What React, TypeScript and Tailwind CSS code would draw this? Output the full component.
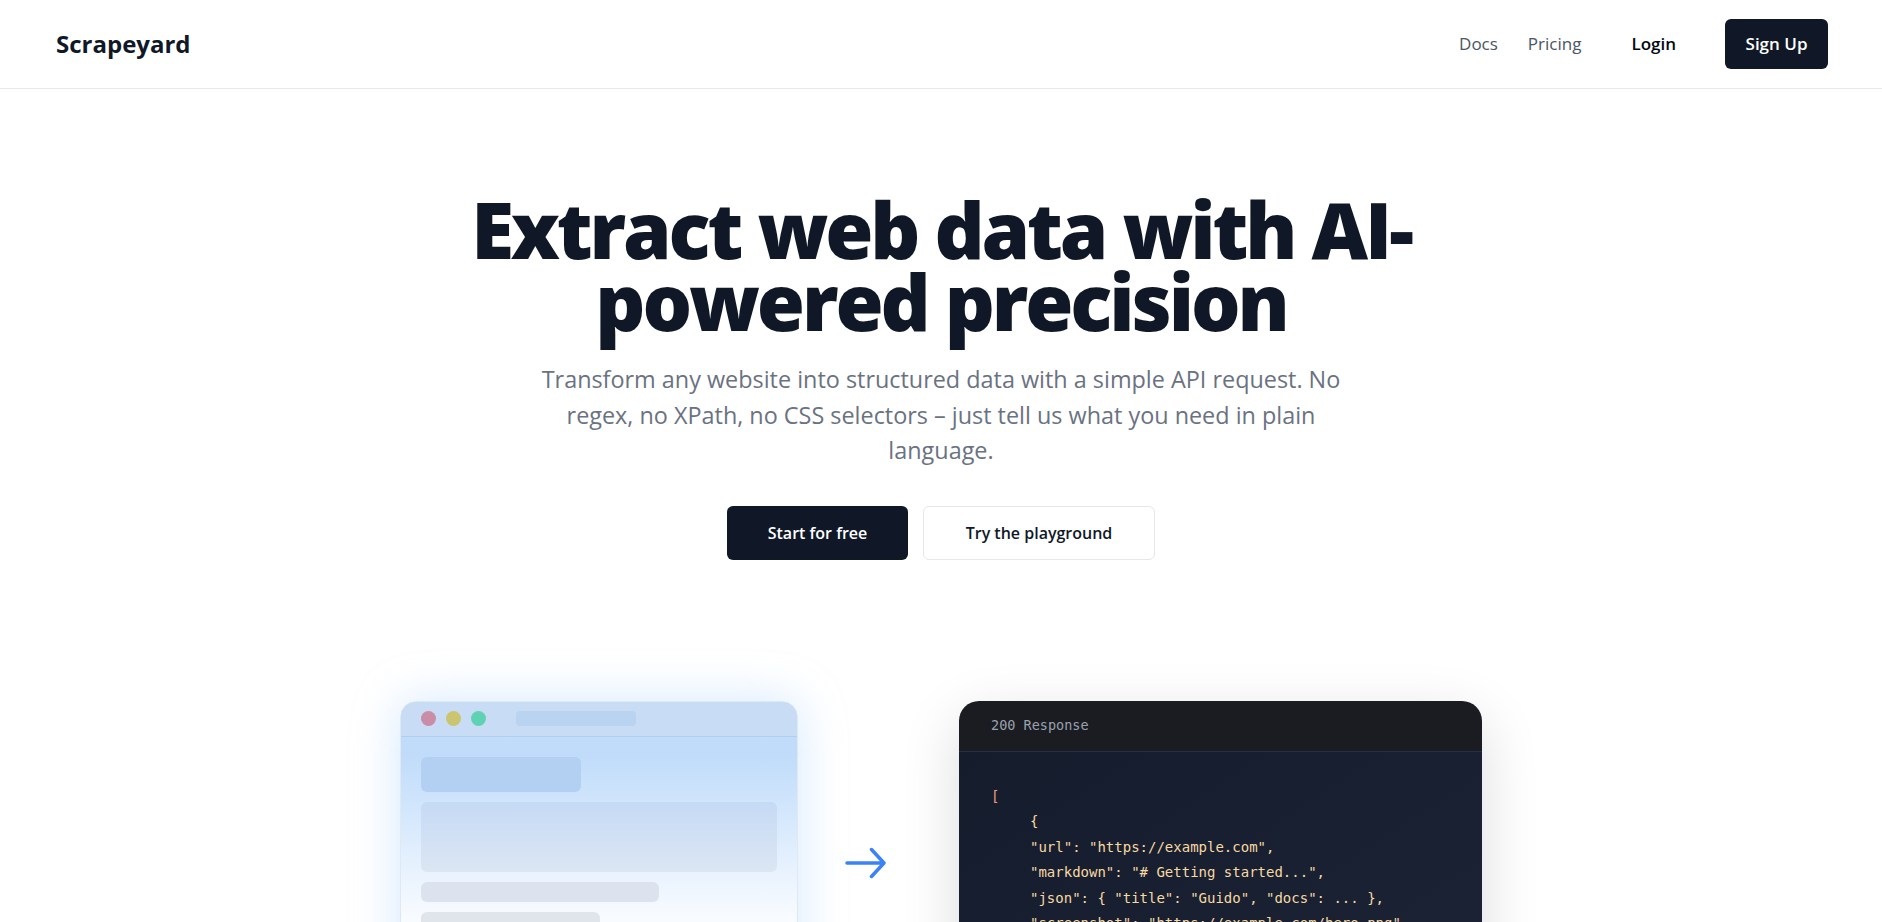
import React from "react";

const sans = "font-['Open_Sans','Noto_Sans',sans-serif]";
const mono = "font-['DejaVu_Sans_Mono','Liberation_Mono',monospace]";

const responseLines = [
  "{",
  '"url": "https://example.com",',
  '"markdown": "# Getting started...",',
  '"json": { "title": "Guido", "docs": ... },',
  '"screenshot": "https://example.com/hero.png"',
  "}",
];

function Header() {
  return (
    <header className="flex h-[89px] items-center justify-between border-b border-gray-200 pl-[56px] pr-[54px]">
      <span className="text-[24px] font-bold text-gray-900">Scrapeyard</span>
      <nav className="flex items-center text-[17px]">
        <a className="text-gray-600">Docs</a>
        <a className="ml-[30px] text-gray-600">Pricing</a>
        <a className="ml-[50px] font-semibold text-gray-950">Login</a>
        <button
          type="button"
          className="ml-[49px] flex h-[50px] w-[103px] items-center justify-center rounded-md bg-gray-900 font-semibold text-white"
        >
          Sign Up
        </button>
      </nav>
    </header>
  );
}

function BrowserMock() {
  return (
    <div className="h-[360px] w-[398px] overflow-hidden rounded-t-2xl border border-[#dfe8f3] bg-gradient-to-b from-[#c0dcfa] from-15% to-[#f8fbff] to-60% shadow-[0_0_48px_rgba(147,197,253,0.4)]">
      <div className="flex h-[35px] items-center border-b border-[#b4cdea] bg-[#c8ddf5] pl-[20px]">
        <div className="flex gap-[10px]">
          <span className="h-[15px] w-[15px] rounded-full bg-[#ca8ca6]" />
          <span className="h-[15px] w-[15px] rounded-full bg-[#cbc570]" />
          <span className="h-[15px] w-[15px] rounded-full bg-[#5fd2b4]" />
        </div>
        <div className="ml-[30px] h-[15px] w-[120px] rounded bg-[#b9d3f1]" />
      </div>
      <div className="flex flex-col gap-[10px] px-[20px] pt-[20px]">
        <div className="h-[35px] w-[160px] rounded-md bg-[#b3cff1]" />
        <div className="h-[70px] w-full rounded-md bg-gradient-to-b from-[#c5daf5] to-[#dce6f3]" />
        <div className="h-[20px] w-[238px] rounded-md bg-[#dce3ee]" />
        <div className="h-[20px] w-[179px] rounded-md bg-[#e0e4eb]" />
        <div className="h-[20px] w-[210px] rounded-md bg-[#e3e7ee]" />
      </div>
    </div>
  );
}

function ResponsePanel() {
  return (
    <div className="w-[523px] overflow-hidden rounded-[20px] shadow-[0_18px_60px_rgba(0,0,0,0.14)]">
      <div className={`flex h-[51px] items-center border-b border-[#243045] bg-[#1b1c21] px-8 text-[13.5px] text-gray-400 ${mono}`}>
        200 Response
      </div>
      <div className={`h-[340px] bg-gradient-to-br from-[#151c2c] to-[#1c2437] pl-8 pt-[32px] text-[14px] leading-[25.5px] text-[#f7d9a2] ${mono}`}>
        <div className="text-[#f19a7c]">[</div>
        <div className="pl-[39px]">
          {responseLines.map((line) => (
            <div key={line} className="whitespace-pre">
              {line}
            </div>
          ))}
        </div>
        <div className="text-[#f19a7c]">]</div>
      </div>
    </div>
  );
}

export default function App() {
  return (
    <div className={`min-h-screen bg-white ${sans}`}>
      <Header />
      <main className="flex flex-col items-center pt-[104px]">
        <h1 className="max-w-[1000px] text-center text-[78px] font-extrabold leading-[72px] tracking-[-0.04em] text-gray-900">
          Extract web data with AI-powered precision
        </h1>
        <p className="mt-[25px] max-w-[830px] text-center text-[23.4px] leading-[35.5px] text-gray-500">
          Transform any website into structured data with a simple API request. No regex, no XPath, no CSS
          selectors – just tell us what you need in plain language.
        </p>
        <div className="mt-[37px] flex gap-[15px]">
          <button
            type="button"
            className="flex h-[54px] w-[181px] items-center justify-center rounded-md bg-gray-900 text-[16px] font-semibold text-white"
          >
            Start for free
          </button>
          <button
            type="button"
            className="flex h-[54px] w-[232px] items-center justify-center rounded-md border border-gray-200 bg-white text-[16px] font-semibold text-gray-900"
          >
            Try the playground
          </button>
        </div>
        <section className="mt-[141px] flex items-start">
          <BrowserMock />
          <svg
            className="ml-[47px] mt-[145px]"
            width="41"
            height="34"
            viewBox="0 0 41 34"
            fill="none"
            stroke="#3b82f6"
            strokeWidth="3.5"
            strokeLinecap="round"
            strokeLinejoin="round"
          >
            <path d="M2 17H39M26.5 3.5L39 17L26.5 30.5" />
          </svg>
          <div className="ml-[73px]">
            <ResponsePanel />
          </div>
        </section>
      </main>
    </div>
  );
}
